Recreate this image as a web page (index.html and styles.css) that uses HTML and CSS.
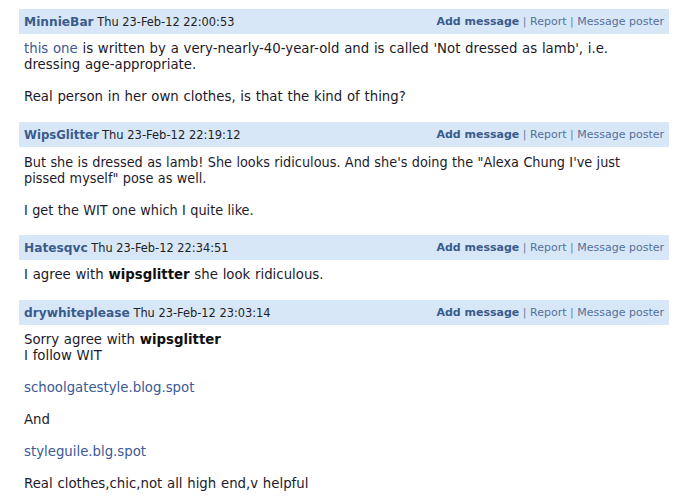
FILE: index.html
```html
<!DOCTYPE html>
<html>
<head>
<meta charset="utf-8">
<link rel="stylesheet" href="styles.css">
</head>
<body>
<div class="thread">
  <div class="post">
    <div class="bar">
      <div class="who"><a class="user">MinnieBar</a> <span class="date">Thu 23-Feb-12 22:00:53</span></div>
      <div class="links"><a class="add">Add message</a> <span class="sep">|</span> <a>Report</a> <span class="sep">|</span> <a>Message poster</a></div>
    </div>
    <div class="msg"><a class="lnk">this one</a> is written by a very-nearly-40-year-old and is called 'Not dressed as lamb', i.e. dressing age-appropriate.<br><br>Real person in her own clothes, is that the kind of thing?</div>
  </div>
  <div class="post narrow">
    <div class="bar">
      <div class="who"><a class="user">WipsGlitter</a> <span class="date">Thu 23-Feb-12 22:19:12</span></div>
      <div class="links"><a class="add">Add message</a> <span class="sep">|</span> <a>Report</a> <span class="sep">|</span> <a>Message poster</a></div>
    </div>
    <div class="msg">But she is dressed as lamb! She looks ridiculous. And she's doing the "Alexa Chung I've just pissed myself" pose as well.<br><br>I get the WIT one which I quite like.</div>
  </div>
  <div class="post">
    <div class="bar">
      <div class="who"><a class="user">Hatesqvc</a> <span class="date">Thu 23-Feb-12 22:34:51</span></div>
      <div class="links"><a class="add">Add message</a> <span class="sep">|</span> <a>Report</a> <span class="sep">|</span> <a>Message poster</a></div>
    </div>
    <div class="msg">I agree with <b>wipsglitter</b> she look ridiculous.</div>
  </div>
  <div class="post">
    <div class="bar">
      <div class="who"><a class="user">drywhiteplease</a> <span class="date">Thu 23-Feb-12 23:03:14</span></div>
      <div class="links"><a class="add">Add message</a> <span class="sep">|</span> <a>Report</a> <span class="sep">|</span> <a>Message poster</a></div>
    </div>
    <div class="msg">Sorry agree with <b>wipsglitter</b><br>I follow WIT<br><br><a class="lnk">schoolgatestyle.blog.spot</a><br><br>And<br><br><a class="lnk">styleguile.blg.spot</a><br><br>Real clothes,chic,not all high end,v helpful</div>
  </div>
</div>
</body>
</html>
```
FILE: styles.css
```css
html, body {
  margin: 0;
  padding: 0;
  background: #ffffff;
}
body {
  font-family: "DejaVu Sans", Verdana, sans-serif;
  color: #1e1a2a;
}
.thread {
  width: 650px;
  padding: 9px 0 0 19px;
}
.post {
  margin-bottom: 17px;
}
.bar {
  display: flex;
  justify-content: space-between;
  align-items: center;
  height: 25px;
  padding: 0 5px;
  background: #d8e7f8;
}
.who {
  font-size: 11.4px;
  white-space: nowrap;
}
.user {
  font-size: 12.2px;
  font-weight: bold;
  color: #3a5c8c;
}
.date {
  font-size: 11.4px;
  color: #222;
}
.links {
  font-size: 11px;
  color: #5a7496;
  white-space: nowrap;
}
.links a {
  color: #55709a;
}
.links .add {
  font-weight: bold;
  color: #3a5c8c;
}
.sep {
  color: #6a7ea0;
}
.msg {
  font-size: 13.3px;
  word-spacing: 0.5px;
  line-height: 16px;
  padding: 7px 5px 0;
}
.msg b {
  color: #111;
}
.lnk {
  color: #3c5a96;
}
.narrow .msg {
  font-family: "DejaVu Sans Condensed", Tahoma, sans-serif;
  font-size: 14.3px;
  word-spacing: 0.3px;
}
.narrow .who {
  font-family: "DejaVu Sans Condensed", Tahoma, sans-serif;
}
.narrow .user {
  font-size: 13px;
}
.narrow .date {
  font-size: 12.8px;
}
```
